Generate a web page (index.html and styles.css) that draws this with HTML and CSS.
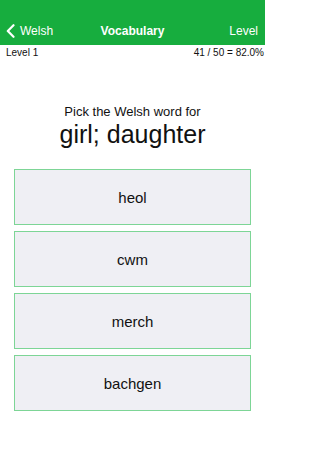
FILE: index.html
```html
<!DOCTYPE html>
<html>
<head>
<meta charset="utf-8">
<link rel="stylesheet" href="styles.css">
</head>
<body>
<div class="app">
  <div class="header">
    <div class="status"></div>
    <div class="nav">
      <div class="back">
        <svg class="chev" width="9" height="14" viewBox="0 0 9 14"><path d="M7.5 1.2 L1.8 7 L7.5 12.8" fill="none" stroke="#fff" stroke-width="2.2" stroke-linecap="round" stroke-linejoin="round"/></svg>
        <span>Welsh</span>
      </div>
      <div class="title">Vocabulary</div>
      <div class="right">Level</div>
    </div>
  </div>
  <div class="info">
    <span>Level 1</span>
    <span>41 / 50 = 82.0%</span>
  </div>
  <div class="prompt">
    <div class="sub">Pick the Welsh word for</div>
    <div class="word">girl; daughter</div>
  </div>
  <div class="choices">
    <div class="choice">heol</div>
    <div class="choice">cwm</div>
    <div class="choice">merch</div>
    <div class="choice">bachgen</div>
  </div>
</div>
</body>
</html>
```
FILE: styles.css
```css
html, body {
  margin: 0;
  padding: 0;
  background: #fff;
  font-family: "Liberation Sans", Arial, sans-serif;
  color: #111;
}
.app {
  width: 265px;
  height: 471px;
  overflow: hidden;
}
.header {
  background: #17ad3e;
  color: #fff;
  height: 45px;
  display: flex;
  flex-direction: column;
}
.status {
  height: 16px;
}
.nav {
  flex: 1;
  display: flex;
  align-items: center;
  justify-content: space-between;
  padding: 0 7px 0 6px;
  position: relative;
  font-size: 12px;
}
.back {
  display: flex;
  align-items: center;
  gap: 5px;
}
.chev {
  display: block;
}
.title {
  position: absolute;
  left: 0;
  right: 0;
  text-align: center;
  font-weight: bold;
  pointer-events: none;
}
.info {
  display: flex;
  justify-content: space-between;
  padding: 2px 1px 0 6px;
  font-size: 10px;
  line-height: 12px;
  color: #111;
}
.prompt {
  text-align: center;
  margin-top: 45px;
}
.sub {
  font-size: 13px;
  line-height: 16px;
}
.word {
  font-size: 25px;
  line-height: 28px;
}
.choices {
  display: flex;
  flex-direction: column;
  gap: 6px;
  margin: 21px 14px 0 14px;
}
.choice {
  height: 54px;
  border: 1px solid #7dd596;
  background: #efeff4;
  display: flex;
  align-items: center;
  justify-content: center;
  font-size: 15px;
  color: #111;
}
```
